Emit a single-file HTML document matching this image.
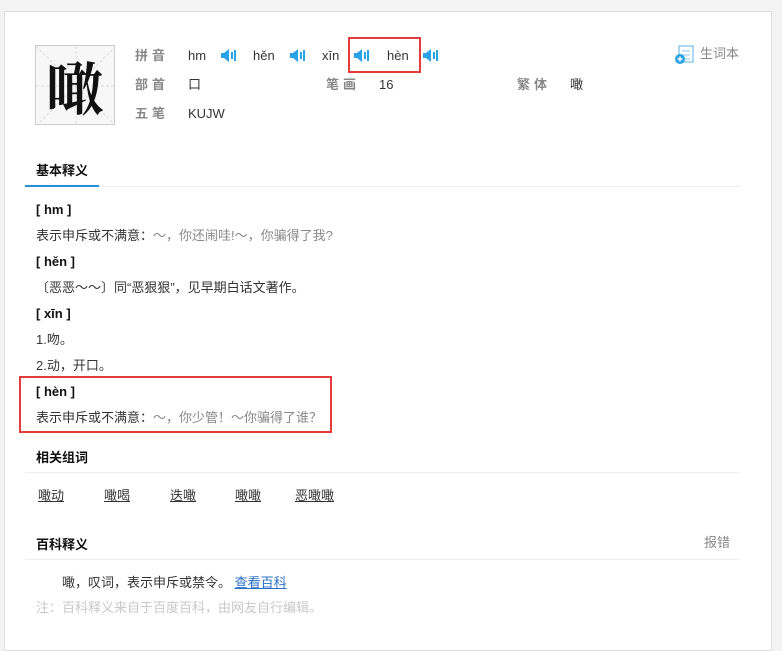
<!DOCTYPE html>
<html><head><meta charset="utf-8"><style>
*{margin:0;padding:0;box-sizing:border-box}
body{width:782px;height:636px;overflow:hidden;background:#f3f3f3;font-family:"Liberation Sans","Noto Sans CJK SC",sans-serif;font-size:13px;color:#333;position:relative}
.frame{position:absolute;left:4px;top:11px;width:768px;height:640px;background:#fff;border:1px solid #ddd}
.a{position:absolute;white-space:nowrap;line-height:16px}
.lab{color:#888;letter-spacing:4px;font-weight:bold}
.spk{position:absolute;width:15px;height:13px}
.b{font-weight:bold;color:#111}
.g{color:#888}
.red{position:absolute;border:2px solid #e23b3b}
.u{text-decoration:underline;color:#333}
.line{position:absolute;height:1px;background:#eee}
</style></head><body>
<div class="frame"></div>
<div style="position:absolute;left:35px;top:45px;width:80px;height:80px;border:1px solid #ccc;background:#f7f7f7;overflow:hidden">
<svg width="80" height="80" style="position:absolute;left:0;top:0"><g stroke="#ddd" stroke-dasharray="3,2" stroke-width="1"><line x1="0" y1="0" x2="80" y2="80"/><line x1="80" y1="0" x2="0" y2="80"/><line x1="40" y1="0" x2="40" y2="80"/><line x1="0" y1="40" x2="80" y2="40"/></g></svg>
<div style="position:absolute;left:0;top:4px;width:78px;text-align:center;font-size:58px;line-height:70px;font-family:'Noto Serif CJK SC',serif;color:#111;font-weight:bold">噉</div>
</div>
<div class="a lab" style="left:135px;top:48px">拼音</div>
<div class="a lab" style="left:135px;top:77px">部首</div>
<div class="a lab" style="left:135px;top:106px">五笔</div>
<div class="a lab" style="left:326px;top:77px">笔画</div>
<div class="a lab" style="left:517px;top:77px">繁体</div>
<div class="a" style="left:188px;top:48px">hm</div>
<div class="a" style="left:253px;top:48px">hěn</div>
<div class="a" style="left:322px;top:48px">xīn</div>
<div class="a" style="left:387px;top:48px">hèn</div>
<div class="a" style="left:188px;top:77px">口</div>
<div class="a" style="left:379px;top:77px">16</div>
<div class="a" style="left:570px;top:77px">噉</div>
<div class="a" style="left:188px;top:106px">KUJW</div>
<svg class="spk" style="left:221px;top:49px" viewBox="0 0 15 13"><path d="M0 4h3l5-4v13l-5-4H0z" fill="#2aa3e6"/><rect x="10" y="3" width="2" height="7" fill="#2aa3e6"/><rect x="13" y="1" width="2" height="11" fill="#2aa3e6"/></svg>
<svg class="spk" style="left:290px;top:49px" viewBox="0 0 15 13"><path d="M0 4h3l5-4v13l-5-4H0z" fill="#2aa3e6"/><rect x="10" y="3" width="2" height="7" fill="#2aa3e6"/><rect x="13" y="1" width="2" height="11" fill="#2aa3e6"/></svg>
<svg class="spk" style="left:354px;top:49px" viewBox="0 0 15 13"><path d="M0 4h3l5-4v13l-5-4H0z" fill="#2aa3e6"/><rect x="10" y="3" width="2" height="7" fill="#2aa3e6"/><rect x="13" y="1" width="2" height="11" fill="#2aa3e6"/></svg>
<svg class="spk" style="left:423px;top:49px" viewBox="0 0 15 13"><path d="M0 4h3l5-4v13l-5-4H0z" fill="#2aa3e6"/><rect x="10" y="3" width="2" height="7" fill="#2aa3e6"/><rect x="13" y="1" width="2" height="11" fill="#2aa3e6"/></svg>
<div class="red" style="left:348px;top:37px;width:73px;height:36px"></div>
<svg style="position:absolute;left:674px;top:45px" width="22" height="20" viewBox="0 0 22 20"><rect x="5" y="1" width="14" height="16" fill="none" stroke="#8fcbef" stroke-width="1.5"/><line x1="8" y1="6" x2="16" y2="6" stroke="#8fcbef"/><line x1="8" y1="10" x2="16" y2="10" stroke="#8fcbef"/><line x1="8" y1="14" x2="16" y2="14" stroke="#8fcbef"/><circle cx="6" cy="14" r="5" fill="#2aa3e6"/><path d="M3.5 14h5M6 11.5v5" stroke="#fff" stroke-width="1.5"/></svg>
<div class="a g" style="left:700px;top:46px">生词本</div>
<div class="a b" style="left:36px;top:163px">基本释义</div>
<div class="line" style="left:25px;top:186px;width:715px"></div>
<div style="position:absolute;left:25px;top:185px;width:74px;height:2px;background:#2a8fd6"></div>
<div class="a b" style="left:36px;top:202px">[ hm ]</div>
<div class="a" style="left:36px;top:228px">表示申斥或不满意：<span class="g">～，你还闹哇!～，你骗得了我?</span></div>
<div class="a b" style="left:36px;top:254px">[ hěn ]</div>
<div class="a" style="left:36px;top:280px">〔恶恶～～〕同“恶狠狠”，见早期白话文著作。</div>
<div class="a b" style="left:36px;top:306px">[ xīn ]</div>
<div class="a" style="left:36px;top:332px">1.吻。</div>
<div class="a" style="left:36px;top:358px">2.动，开口。</div>
<div class="a b" style="left:36px;top:384px">[ hèn ]</div>
<div class="a" style="left:36px;top:410px">表示申斥或不满意：<span class="g">～，你少管！～你骗得了谁？</span></div>
<div class="red" style="left:19px;top:376px;width:313px;height:57px"></div>
<div class="a b" style="left:36px;top:450px">相关组词</div>
<div class="line" style="left:25px;top:472px;width:715px"></div>
<div class="a u" style="left:38px;top:488px">噉动</div>
<div class="a u" style="left:104px;top:488px">噉喝</div>
<div class="a u" style="left:170px;top:488px">迭噉</div>
<div class="a u" style="left:235px;top:488px">噉噉</div>
<div class="a u" style="left:295px;top:488px">恶噉噉</div>
<div class="a b" style="left:36px;top:537px">百科释义</div>
<div class="a g" style="left:704px;top:535px">报错</div>
<div class="line" style="left:25px;top:559px;width:715px"></div>
<div class="a" style="left:62px;top:575px">噉，叹词，表示申斥或禁令。 <span style="color:#2a6fc9;text-decoration:underline">查看百科</span></div>
<div class="a" style="left:36px;top:600px;color:#c8c8c8">注：百科释义来自于百度百科，由网友自行编辑。</div>
</body></html>
